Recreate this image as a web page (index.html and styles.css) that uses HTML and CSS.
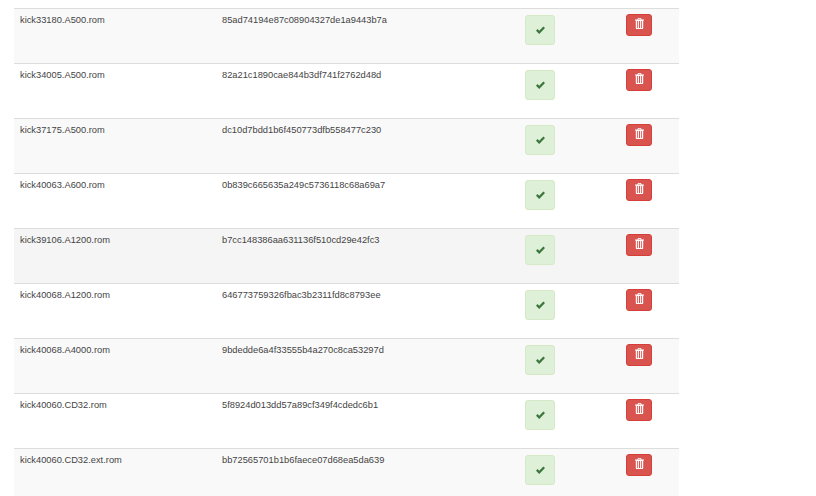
FILE: index.html
```html
<!DOCTYPE html>
<html lang="en">
<head>
<meta charset="utf-8">
<title>Kickstart ROMs</title>
<link rel="stylesheet" href="styles.css">
</head>
<body>
<svg class="defs" width="0" height="0" aria-hidden="true">
  <symbol id="i-check" viewBox="0 0 9 8"><path d="M0 4.7 1.6 3.1 3.2 4.7 7.4 0.4 9 2 3.2 7.9Z"/></symbol>
  <symbol id="i-trash" viewBox="0 0 9 11"><path fill-rule="evenodd" d="M3 0H6L6.6 1.6H9V2.6H8.2V10.2C8.2 10.7 7.9 11 7.4 11H1.6C1.1 11 .8 10.7 .8 10.2V2.6H0V1.6H2.4ZM3.6 .7 3.3 1.6H5.7L5.4 .7ZM2.2 3V10H3.1V3ZM4 3V10H5V3ZM5.9 3V10H6.8V3Z"/></symbol>
</svg>
<main class="wrap">
<table class="roms">
  <colgroup><col class="c1"><col class="c2"><col class="c3"><col class="c4"></colgroup>
  <tbody>
    <tr class="odd"><td>kick33180.A500.rom</td><td>85ad74194e87c08904327de1a9443b7a</td><td><span class="ok"><svg><use href="#i-check"/></svg></span></td><td><button class="del"><svg><use href="#i-trash"/></svg></button></td></tr>
    <tr><td>kick34005.A500.rom</td><td>82a21c1890cae844b3df741f2762d48d</td><td><span class="ok"><svg><use href="#i-check"/></svg></span></td><td><button class="del"><svg><use href="#i-trash"/></svg></button></td></tr>
    <tr class="odd"><td>kick37175.A500.rom</td><td>dc10d7bdd1b6f450773dfb558477c230</td><td><span class="ok"><svg><use href="#i-check"/></svg></span></td><td><button class="del"><svg><use href="#i-trash"/></svg></button></td></tr>
    <tr><td>kick40063.A600.rom</td><td>0b839c665635a249c5736118c68a69a7</td><td><span class="ok"><svg><use href="#i-check"/></svg></span></td><td><button class="del"><svg><use href="#i-trash"/></svg></button></td></tr>
    <tr class="hover"><td>kick39106.A1200.rom</td><td>b7cc148386aa631136f510cd29e42fc3</td><td><span class="ok"><svg><use href="#i-check"/></svg></span></td><td><button class="del"><svg><use href="#i-trash"/></svg></button></td></tr>
    <tr><td>kick40068.A1200.rom</td><td>646773759326fbac3b2311fd8c8793ee</td><td><span class="ok"><svg><use href="#i-check"/></svg></span></td><td><button class="del"><svg><use href="#i-trash"/></svg></button></td></tr>
    <tr class="odd"><td>kick40068.A4000.rom</td><td>9bdedde6a4f33555b4a270c8ca53297d</td><td><span class="ok"><svg><use href="#i-check"/></svg></span></td><td><button class="del"><svg><use href="#i-trash"/></svg></button></td></tr>
    <tr><td>kick40060.CD32.rom</td><td>5f8924d013dd57a89cf349f4cdedc6b1</td><td><span class="ok"><svg><use href="#i-check"/></svg></span></td><td><button class="del"><svg><use href="#i-trash"/></svg></button></td></tr>
    <tr class="odd"><td>kick40060.CD32.ext.rom</td><td>bb72565701b1b6faece07d68ea5da639</td><td><span class="ok"><svg><use href="#i-check"/></svg></span></td><td><button class="del"><svg><use href="#i-trash"/></svg></button></td></tr>
  </tbody>
</table>
</main>
</body>
</html>
```
FILE: styles.css
```css
html, body {
  margin: 0;
  padding: 0;
  background: #fff;
  height: 100%;
  overflow: hidden;
}
body {
  font-family: "Liberation Sans", Arial, sans-serif;
  font-size: 9.3px;
  line-height: 13px;
  color: #444;
}
.defs { position: absolute; }
.wrap { padding: 8px 0 0 14px; }
.roms {
  border-collapse: separate;
  border-spacing: 0;
  table-layout: fixed;
  width: 665px;
}
.c1 { width: 202px; }
.c2 { width: 303px; }
.c3 { width: 101px; }
.c4 { width: 59px; }
.roms td {
  height: 55px;
  box-sizing: border-box;
  padding: 5px 6px 0;
  vertical-align: top;
  border-top: 1px solid #ddd;
  white-space: nowrap;
}
.odd td { background: #f9f9f9; }
.hover td { background: #f5f5f5; }
.ok {
  display: flex;
  align-items: center;
  justify-content: center;
  box-sizing: border-box;
  width: 30px;
  height: 30px;
  margin-top: 1px;
  background: #dff0d8;
  border: 1px solid #d6e9c6;
  border-radius: 3px;
  color: #3c763d;
}
.ok svg {
  width: 9px;
  height: 8px;
  fill: currentColor;
}
.del {
  display: flex;
  justify-content: center;
  box-sizing: border-box;
  width: 26px;
  height: 22px;
  margin: 0;
  padding: 3px 0 0;
  background: #d9534f;
  border: 1px solid #d43f3a;
  border-radius: 3px;
  color: #fff;
}
.del svg {
  width: 9px;
  height: 11px;
  fill: currentColor;
}
```
